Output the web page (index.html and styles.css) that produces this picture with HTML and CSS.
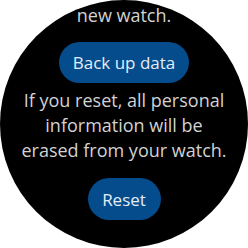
FILE: index.html
```html
<!DOCTYPE html>
<html lang="en">
<head>
  <meta charset="UTF-8">
  <meta name="viewport" content="width=device-width, initial-scale=1.0">
  <title>Reset watch</title>
  <link rel="stylesheet" href="styles.css">
</head>
<body>
<div class="watch">
  <div class="screen">
    <p class="text">new watch.</p>
    <button class="pill backup-btn">Back up data</button>
    <p class="text info">If you reset, all personal<br>information will be<br>erased from your watch.</p>
    <button class="pill reset-btn">Reset</button>
  </div>
</div>
</body>
</html>
```

FILE: styles.css
```css
:root {
  --text-color: #d2d2d2;
  --button-color: #044c8c;
  --button-text: #e4edf7;
}

* {
  margin: 0;
  padding: 0;
  box-sizing: border-box;
  font-family: 'Open Sans', Roboto, sans-serif;
}

body {
  background: #fff;
  width: 248px;
  height: 248px;
}

.watch {
  width: 248px;
  height: 248px;
  border-radius: 50%;
  background: #000;
  overflow: hidden;
}

.screen {
  display: flex;
  flex-direction: column;
  align-items: center;
  padding-top: 3px;
}

.text {
  color: var(--text-color);
  font-size: 18px;
  line-height: 25px;
  text-align: center;
}

.pill {
  height: 41px;
  padding: 0;
  border: none;
  border-radius: 21px;
  background: var(--button-color);
  color: var(--button-text);
  font-size: 17px;
  white-space: nowrap;
}

.backup-btn {
  margin-top: 14px;
  width: 130px;
}

.info {
  margin-top: 5px;
}

.reset-btn {
  margin-top: 15px;
  height: 42px;
  width: 73px;
}
```
